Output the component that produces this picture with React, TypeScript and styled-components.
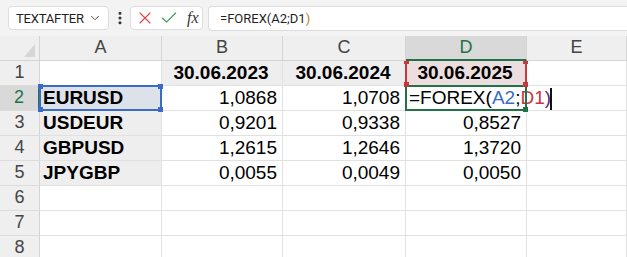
import React from "react";
import styled, { createGlobalStyle, css } from "styled-components";
import { ChevronDown, EllipsisVertical, X, Check } from "lucide-react";

const Global = createGlobalStyle`
  html, body { margin: 0; padding: 0; background: #fff; }
  body { font-family: "Liberation Sans", Arial, sans-serif; overflow: hidden; }
`;

const Page = styled.div`
  width: 627px;
  height: 257px;
  overflow: hidden;
  background: #fff;
`;

const TopBar = styled.div`
  display: flex;
  align-items: center;
  height: 36px;
  padding-left: 8px;
  background: #f3f3f3;
  font-family: Roboto, "Liberation Sans", sans-serif;
  font-size: 13px;
  color: #1f1f1f;
`;

const NameBox = styled.div`
  box-sizing: border-box;
  width: 101px;
  height: 24px;
  display: flex;
  align-items: center;
  justify-content: space-between;
  padding: 0 6px 0 7px;
  background: #fff;
  border: 1px solid #dddddd;
  border-radius: 4px;
`;

const NameText = styled.span`
  letter-spacing: -0.2px;
`;

const Dots = styled.div`
  width: 21px;
  display: flex;
  justify-content: center;
  color: #333;
`;

const ButtonGroup = styled.div`
  box-sizing: border-box;
  width: 73px;
  height: 24px;
  display: flex;
  align-items: center;
  gap: 4px;
  padding-left: 4px;
  background: #fff;
  border: 1px solid #dddddd;
  border-radius: 4px;
`;

const Fx = styled.span`
  font-family: "Liberation Serif", "DejaVu Serif", serif;
  font-style: italic;
  font-size: 16px;
  color: #333;
  margin-left: 4px;
`;

const FormulaBox = styled.div`
  flex: 1;
  box-sizing: border-box;
  margin-left: 5px;
  height: 25px;
  display: flex;
  align-items: center;
  padding-left: 11px;
  font-size: 13px;
  background: #fff;
  border: 1px solid #dcdcdc;
  border-right: none;
  border-radius: 4px 0 0 4px;
`;

const Sheet = styled.div`
  display: grid;
  grid-template-columns: 40px 122px 121px 123px 121px 100px;
  grid-auto-rows: 25px;
  font-size: 19px;
  color: #000;
`;

const Corner = styled.div`
  box-sizing: border-box;
  position: relative;
  background: #efefef;
  border-right: 1px solid #d4d4d4;
  border-bottom: 1px solid #d4d4d4;
  &::after {
    content: "";
    position: absolute;
    right: 4px;
    bottom: 3px;
    width: 0;
    height: 0;
    border-left: 11px solid transparent;
    border-bottom: 13px solid #d6d6d6;
  }
`;

const ColHeader = styled.div<{ $active?: boolean }>`
  box-sizing: border-box;
  display: flex;
  align-items: flex-end;
  justify-content: center;
  padding-bottom: 2px;
  font-size: 18px;
  color: #444;
  background: #efefef;
  border-right: 1px solid #d4d4d4;
  border-bottom: 1px solid #d4d4d4;
  position: relative;
  z-index: 4;
  ${(p) =>
    p.$active &&
    css`
      background: #d9d9d9;
      color: #217346;
      border-bottom: 2px solid #217346;
      padding-bottom: 1px;
    `}
`;

const RowHeader = styled.div<{ $active?: boolean }>`
  box-sizing: border-box;
  display: flex;
  align-items: flex-end;
  justify-content: center;
  padding-bottom: 2px;
  font-size: 18px;
  color: #444;
  background: #efefef;
  border-right: 1px solid #d4d4d4;
  border-bottom: 1px solid #dcdcdc;
  ${(p) =>
    p.$active &&
    css`
      background: #d9d9d9;
      color: #217346;
      border-right: 2px solid #217346;
    `}
`;

type Tone = "plain" | "gray" | "blue" | "pink";
const toneBg: Record<Tone, string> = {
  plain: "transparent",
  gray: "#eeeeee",
  blue: "#dde2ea",
  pink: "#ecdede",
};

const Cell = styled.div<{ $bold?: boolean; $align?: "left" | "right" | "center"; $tone?: Tone; $front?: boolean }>`
  box-sizing: border-box;
  position: relative;
  display: flex;
  align-items: flex-end;
  justify-content: ${(p) =>
    p.$align === "right" ? "flex-end" : p.$align === "center" ? "center" : "flex-start"};
  padding: 0 5px 1px 3px;
  white-space: nowrap;
  font-weight: ${(p) => (p.$bold ? 700 : 400)};
  background: ${(p) => toneBg[p.$tone || "plain"]};
  border-right: 1px solid #e1e1e1;
  border-bottom: 1px solid #e1e1e1;
  z-index: ${(p) => (p.$front ? 2 : "auto")};
`;

const RefFrame = styled.div<{ $color: string; $w: number; $sidesOnly?: boolean }>`
  position: absolute;
  left: -1px;
  top: -1px;
  right: -1px;
  bottom: -1px;
  border: ${(p) => p.$w}px solid ${(p) => p.$color};
  ${(p) => p.$sidesOnly && "border-top-color: transparent; border-bottom-color: transparent;"}
  pointer-events: none;
  z-index: 3;
`;

const Handle = styled.span<{ $color: string; $v: "top" | "bottom"; $h: "left" | "right" }>`
  position: absolute;
  width: 5px;
  height: 5px;
  background: ${(p) => p.$color};
  z-index: 5;
  ${(p) => (p.$v === "top" ? "top: -3px;" : "bottom: -3px;")}
  ${(p) => (p.$h === "left" ? "left: -3px;" : "right: -3px;")}
`;

const Caret = styled.span`
  display: inline-block;
  flex: none;
  width: 2px;
  height: 22px;
  background: #111;
  margin-left: -1px;
  align-self: center;
  position: relative;
  top: 1px;
`;

const Part = styled.span<{ $color: string }>`
  color: ${(p) => p.$color};
`;

const BLUE = "#3a6cc6";
const RED = "#c8373c";
const GREEN = "#217346";

const cols = ["A", "B", "C", "D", "E"];

const data: { label: string; vals: string[] }[] = [
  { label: "USDEUR", vals: ["0,9201", "0,9338", "0,8527"] },
  { label: "GBPUSD", vals: ["1,2615", "1,2646", "1,3720"] },
  { label: "JPYGBP", vals: ["0,0055", "0,0049", "0,0050"] },
];

function Corners({ color }: { color: string }) {
  return (
    <>
      <Handle $color={color} $v="top" $h="left" />
      <Handle $color={color} $v="top" $h="right" />
      <Handle $color={color} $v="bottom" $h="left" />
      <Handle $color={color} $v="bottom" $h="right" />
    </>
  );
}

export default function App() {
  return (
    <Page>
      <Global />
      <TopBar>
        <NameBox>
          <NameText>TEXTAFTER</NameText>
          <ChevronDown size={14} strokeWidth={1.6} color="#444" />
        </NameBox>
        <Dots>
          <EllipsisVertical size={16} strokeWidth={2.6} />
        </Dots>
        <ButtonGroup>
          <X size={20} strokeWidth={1.4} color="#e0474c" />
          <Check size={20} strokeWidth={1.4} color="#3a9a5b" />
          <Fx>fx</Fx>
        </ButtonGroup>
        <FormulaBox>
          =FOREX(A2;D1<Part $color="#b7791f">)</Part>
        </FormulaBox>
      </TopBar>
      <Sheet>
        <Corner />
        {cols.map((c) => (
          <ColHeader key={c} $active={c === "D"}>
            {c}
          </ColHeader>
        ))}

        <RowHeader>1</RowHeader>
        <Cell />
        <Cell $bold $align="center" $tone="gray">30.06.2023</Cell>
        <Cell $bold $align="center" $tone="gray">30.06.2024</Cell>
        <Cell $bold $align="center" $tone="pink">
          30.06.2025
          <RefFrame $color={RED} $w={2} $sidesOnly>
            <Corners color={RED} />
          </RefFrame>
        </Cell>
        <Cell />

        <RowHeader $active>2</RowHeader>
        <Cell $bold $tone="blue">
          EURUSD
          <RefFrame $color={BLUE} $w={2}>
            <Corners color={BLUE} />
          </RefFrame>
        </Cell>
        <Cell $align="right">1,0868</Cell>
        <Cell $align="right">1,0708</Cell>
        <Cell $front>
          =FOREX(<Part $color={BLUE}>A2</Part>;<Part $color={RED}>D1</Part>
          <Part $color="#5a2a6a">)</Part>
          <Caret />
          <RefFrame $color={GREEN} $w={2}>
            <Handle $color={GREEN} $v="bottom" $h="right" />
          </RefFrame>
        </Cell>
        <Cell />

        {data.map((r, i) => (
          <React.Fragment key={r.label}>
            <RowHeader>{i + 3}</RowHeader>
            <Cell $bold $tone="gray">{r.label}</Cell>
            {r.vals.map((v) => (
              <Cell key={v} $align="right">{v}</Cell>
            ))}
            <Cell />
          </React.Fragment>
        ))}

        {[6, 7, 8].map((n) => (
          <React.Fragment key={n}>
            <RowHeader>{n}</RowHeader>
            <Cell />
            <Cell />
            <Cell />
            <Cell />
            <Cell />
          </React.Fragment>
        ))}
      </Sheet>
    </Page>
  );
}
